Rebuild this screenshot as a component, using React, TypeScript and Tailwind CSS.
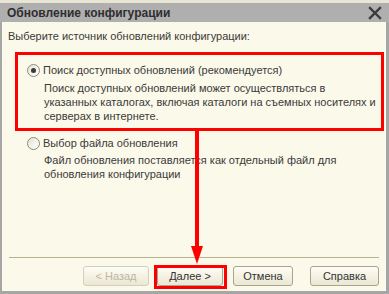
import React from 'react';

const font = { fontFamily: '"Liberation Sans", Arial, sans-serif' };

const Radio = ({ checked }: { checked?: boolean }) => (
  <span className="w-[13px] h-[13px] rounded-full border border-[#8f8c7e] bg-gradient-to-br from-[#e6e3d6] to-white flex items-center justify-center shrink-0">
    {checked && <span className="w-[5px] h-[5px] rounded-full bg-[#3a3a3a]" />}
  </span>
);

const Button = ({ label, disabled, cls }: { label: string; disabled?: boolean; cls: string }) => (
  <button
    className={`${cls} h-[20px] rounded-[3px] border text-[11px] leading-none bg-gradient-to-b from-[#fefdf7] to-[#ebe7d3] ${
      disabled ? 'border-[#d3cfbd] text-[#bdb6a0]' : 'border-[#a8a490] text-[#333]'
    }`}
  >
    {label}
  </button>
);

export default function App() {
  return (
    <div className="w-[389px] h-[294px] bg-[#a6a6a6] flex flex-col relative text-[#3a3a3a]" style={font}>
      <div className="h-[3px] bg-[#e8e5d3]" />
      <div className="h-[19px] bg-[#afafaf] flex items-center justify-between pl-[7px] pr-[7px]">
        <span className="text-[12px] font-bold text-[#2e2e2e]">Обновление конфигурации</span>
        <svg width="14" height="14" viewBox="0 0 14 14">
          <path d="M2 2 L12 12 M12 2 L2 12" stroke="#3c3c3c" strokeWidth="2.4" strokeLinecap="square" />
        </svg>
      </div>
      <div className="flex-1 ml-[2px] mr-[3px] mb-[3px] bg-[#fbf9ea] flex flex-col text-[11px] leading-[14px]">
        <div className="pl-[6px] pt-[7px]">Выберите источник обновлений конфигурации:</div>

        <div className="pl-[25px] pr-[8px] pt-[20px] flex flex-col">
          <div className="flex items-center gap-[3px]">
            <Radio checked />
            <span>Поиск доступных обновлений (рекомендуется)</span>
          </div>
          <div className="pl-[17px] pt-[4px]">
            Поиск доступных обновлений может осуществляться в указанных каталогах, включая каталоги на съемных носителях и серверах в интернете.
          </div>

          <div className="flex items-center gap-[3px] pt-[13px]">
            <Radio />
            <span>Выбор файла обновления</span>
          </div>
          <div className="pl-[17px] pt-[3px] pr-[30px]">
            Файл обновления поставляется как отдельный файл для обновления конфигурации
          </div>
        </div>

        <div className="flex-1" />
        <div className="mx-[7px] h-px bg-[#b9b291]" />
        <div className="flex justify-end pr-[7px] pt-[8px] pb-[5px]">
          <Button label="< Назад" disabled cls="w-[66px]" />
          <Button label="Далее >" cls="w-[66px] ml-[8px]" />
          <Button label="Отмена" cls="w-[60px] ml-[10px]" />
          <Button label="Справка" cls="w-[69px] ml-[17px]" />
        </div>
      </div>

      {/* red annotations */}
      <div className="absolute left-[15px] top-[52px] w-[369px] h-[79px] border-[3px] border-[#ff0000]" />
      <div className="absolute left-[195px] top-[130px] w-[4px] h-[118px] bg-[#ff0000]" />
      <svg className="absolute left-[191px] top-[246px]" width="12" height="18" viewBox="0 0 12 18">
        <path d="M0 0 L12 0 L6 18 Z" fill="#ff0000" />
      </svg>
      <div className="absolute left-[154px] top-[265px] w-[73px] h-[24px] border-[3px] border-[#ff0000]" />
    </div>
  );
}
